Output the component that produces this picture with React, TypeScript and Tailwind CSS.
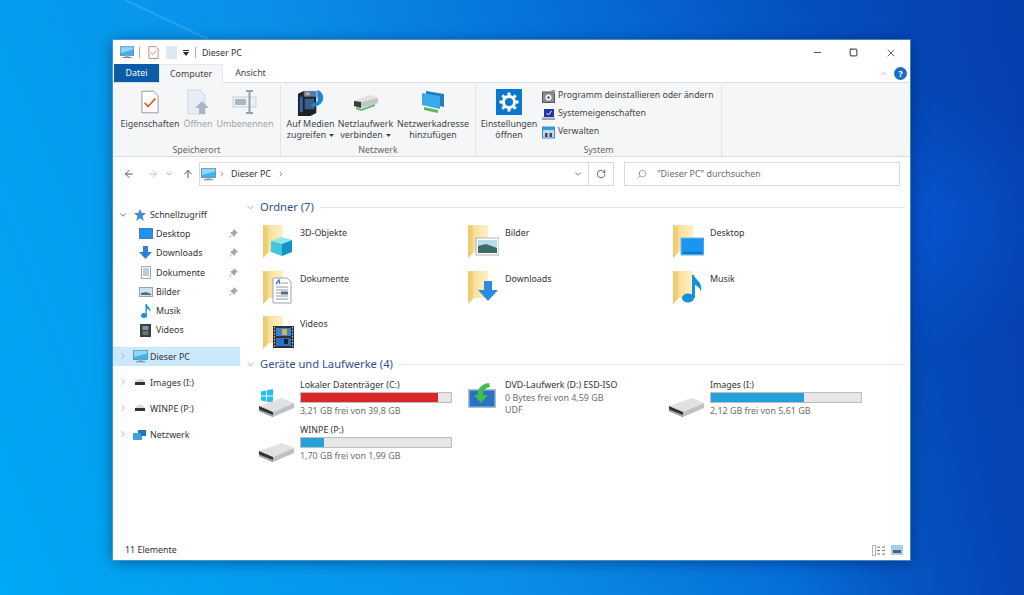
import React from 'react';
import { ArrowLeft, ArrowRight, ArrowUp, ChevronDown, ChevronRight, ChevronUp, Minus, RotateCw, Search, Square, X } from 'lucide-react';

function Monitor({ className = 'w-[17px] h-[15px]' }: { className?: string }) {
  return (
    <svg viewBox="0 0 17 15" className={className}>
      <rect x="0.5" y="0.5" width="16" height="10.5" fill="#3fb2ee" stroke="#5b8fa8" />
      <path d="M1 1h15v3L1 8z" fill="#8ed8f8" />
      <rect x="6" y="11" width="5" height="2" fill="#9fb3c0" />
      <rect x="3" y="13" width="11" height="1.2" fill="#6f8796" />
    </svg>
  );
}

function Folder({ children }: { children?: React.ReactNode }) {
  return (
    <svg viewBox="0 0 32 36" className="w-[32px] h-[36px] shrink-0">
      <defs>
        <linearGradient id="folderFill" x1="0" x2="1" y1="0" y2="0">
          <stop offset="0" stopColor="#f2d27a" />
          <stop offset="0.4" stopColor="#fae3a0" />
          <stop offset="1" stopColor="#fdf0c4" />
        </linearGradient>
      </defs>
      <path d="M1 1h20v27H7l-6 6z" fill="url(#folderFill)" />
      <path d="M1 1v33l5-5V3z" fill="#e6bb55" opacity="0.35" />
      {children}
    </svg>
  );
}

const cube = (
  <g>
    <path d="M9 17l10-4 11 3-10 4z" fill="#8ce6f0" />
    <path d="M9 17l11 3v12L9 28z" fill="#42c6de" />
    <path d="M20 20l10-4v12l-10 4z" fill="#0f94c6" />
  </g>
);
const picture = (
  <g>
    <rect x="9" y="14" width="23" height="17" fill="#fff" stroke="#a9b4bd" />
    <rect x="11" y="16" width="19" height="13" fill="#b7dbe8" />
    <path d="M11 22l8-2 11 4v5H11z" fill="#3d6b68" />
  </g>
);
const desktop = (
  <g>
    <rect x="9" y="14" width="23" height="17" fill="#1b96f0" stroke="#6db7e6" />
    <rect x="11" y="28" width="19" height="1.5" fill="#0b6fc0" />
  </g>
);
const doc = (
  <g>
    <path d="M11 8h14l4 4v21H11z" fill="#fff" stroke="#9aa5ad" />
    <path d="M14 14l3-4 1 4" fill="none" stroke="#3a7bd0" strokeWidth="1.4" />
    <path d="M20 13h6M14 17h12M14 20h12M14 23h5M14 26h12M14 29h12" stroke="#8d98a2" strokeWidth="1" />
    <rect x="19" y="21.5" width="7" height="3" fill="#4e7082" />
  </g>
);
const download = <path d="M17 11h8v9h6L21 31 11 20h6z" fill="#2f8be0" />;
const note = (
  <g fill="#1890dc">
    <ellipse cx="16" cy="28" rx="6" ry="4.5" />
    <path d="M20 5h2c1 5 9 6 7 17-1-4-3-6-6-7v13h-3z" />
  </g>
);
const film = (
  <g>
    <rect x="11" y="11" width="21" height="22" fill="#2d3238" />
    <rect x="14" y="13" width="15" height="8" fill="#3b82d6" />
    <rect x="14" y="23" width="15" height="8" fill="#2a70c8" />
    <rect x="20" y="14" width="5" height="6" fill="#d9b23c" />
    <rect x="22" y="24" width="4" height="5" fill="#15202c" />
    <path d="M12.5 12v20M30.5 12v20" stroke="#c9ced2" strokeWidth="1" strokeDasharray="1.5 1.5" />
  </g>
);

function Drive({ windows = false }: { windows?: boolean }) {
  return (
    <svg viewBox="0 0 36 28" className="w-[36px] h-[28px] shrink-0">
      {windows && <path d="M2 2.500l5-1v5H2zM8 1.300L14 0v6.500H8zM2 7.500h5v5l-5-1zM8 7.500h6V14l-6-1.200z" fill="#22c0ec" />}
      <path d="M0 17L23 9l12 5-21 9z" fill="#e0e1e2" />
      <path d="M0 17l14 6v5L0 22z" fill="#333" />
      <path d="M0 20.500l14 5.500v2L0 22z" fill="#a9abad" />
      <path d="M14 23l21-9v5L14 28z" fill="#bfc1c3" />
    </svg>
  );
}

function DvdDrive() {
  return (
    <svg viewBox="0 0 28 25" className="w-[28px] h-[25px] shrink-0">
      <rect x="0" y="6" width="28" height="19" fill="#a9bfd2" />
      <rect x="1.500" y="7.500" width="25" height="16" fill="#2b72c6" />
      <path d="M21 0C13 1 9 6 10 12H6l7 8 7-8h-5c0-4 2-7 7-8z" fill="#3cc24a" />
    </svg>
  );
}

function TinyDrive() {
  return (
    <svg viewBox="0 0 12 8" className="w-[12px] h-[8px]">
      <path d="M1 4l3-3h5l2 3v3H1z" fill="#d9d9d9" />
      <rect x="1" y="4" width="10" height="3" fill="#333" />
    </svg>
  );
}

function Pin() {
  return (
    <svg viewBox="0 0 9 9" className="w-[9px] h-[9px]">
      <path d="M5 0l4 4-1.500.5L6 6l-.5 2L1 3.500 3 3l1.500-1.500z" fill="#a6a6a6" />
      <path d="M2.500 6.500L0.500 8.500" stroke="#a6a6a6" />
    </svg>
  );
}

function Caret() {
  return (
    <svg viewBox="0 0 5 3" className="inline-block w-[5px] h-[3px] ml-[3px] align-middle">
      <path d="M0 0h5L2.500 3z" fill="#444" />
    </svg>
  );
}

function GroupLabel({ children }: { children: React.ReactNode }) {
  return <div className="h-[12px] leading-[12px] text-center text-[#666]">{children}</div>;
}

function RibbonButton({ icon, lines, disabled, caret, w }: { icon: React.ReactNode; lines: string[]; disabled?: boolean; caret?: boolean; w: string }) {
  return (
    <div className={`flex flex-col items-center ${w} ${disabled ? 'text-[#a2a2a2]' : 'text-[#444]'}`}>
      <div className="h-[32px] flex items-center justify-center">{icon}</div>
      {lines.map((l, i) => (
        <div key={l} className="h-[11px] leading-[11px] whitespace-nowrap">
          {l}
          {caret && i === 1 && <Caret />}
        </div>
      ))}
    </div>
  );
}

const pageCheck = (
  <svg viewBox="0 0 20 26" className="w-[18px] h-[24px]">
    <path d="M1 1h13l5 5v19H1z" fill="#fff" stroke="#8f8f8f" />
    <path d="M4 14l4 4 8-9" fill="none" stroke="#e2682c" strokeWidth="2" />
  </svg>
);
const openIcon = (
  <svg viewBox="0 0 24 26" className="w-[24px] h-[26px]">
    <path d="M2 1h12l5 5v19H2z" fill="#e8eef7" stroke="#ccd6e2" />
    <path d="M16 12l7 7h-4v6h-6v-6H9z" fill="#a9b5c2" />
  </svg>
);
const renameIcon = (
  <svg viewBox="0 0 26 24" className="w-[26px] h-[24px]">
    <rect x="1" y="7" width="23" height="10" fill="#eef1f5" stroke="#c7d0da" />
    <rect x="3" y="9" width="11" height="6" fill="#a8b6c6" />
    <path d="M14 1h7M14 23h7M17.500 1v22" stroke="#93a2b2" strokeWidth="2" />
  </svg>
);
const mediaIcon = (
  <svg viewBox="0 0 28 28" className="w-[27px] h-[27px]">
    <path d="M1 5l6-3h13v23l-6 3H1z" fill="#1e2228" />
    <path d="M7 2h13v6H7z" fill="#6e7d8c" />
    <rect x="9" y="3.500" width="4" height="3" fill="#a7b6c2" />
    <rect x="14.500" y="3.500" width="4" height="3" fill="#3d7fc0" />
    <rect x="8" y="10" width="10" height="11" fill="#3a5f88" />
    <path d="M3 8h3v16H3z" fill="#3a66a0" />
    <path d="M21 1c4 1 7 5 6 10-1 4-4 6-7 7-2 1-5 1-5-1s3-3 5-3c2-1 2-3 1-6z" fill="#1a86d8" />
  </svg>
);
const netDriveIcon = (
  <svg viewBox="0 0 26 20" className="w-[26px] h-[20px]">
    <path d="M1 9l17-6 7 3v5L8 16 1 14z" fill="#c4c6c8" />
    <path d="M1 9l17-6 7 3-17 4z" fill="#e2e3e4" />
    <path d="M1 9l7 1v6l-7-2z" fill="#3c3c3c" />
    <path d="M3 15l5 2 14-5v2L8 19l-5-2z" fill="#5cbb5e" />
  </svg>
);
const netAddrIcon = (
  <svg viewBox="0 0 24 24" className="w-[24px] h-[24px]">
    <path d="M5 1l18 3v13L5 13z" fill="#1f7dc4" />
    <path d="M1 3l18 3v13L1 15z" fill="#39a9e8" />
    <path d="M3 17l14 3v3L3 20z" fill="#57b95c" />
  </svg>
);
const gearIcon = (
  <svg viewBox="0 0 26 26" className="w-[26px] h-[26px]">
    <rect width="26" height="26" fill="#0a78d0" />
    <circle cx="13" cy="13" r="5.500" fill="none" stroke="#fff" strokeWidth="3" />
    <path d="M13 3.500v4M13 18.500v4M3.500 13h4M18.500 13h4M6.300 6.300l2.800 2.800M16.900 16.900l2.800 2.800M19.700 6.300l-2.800 2.800M9.100 16.900l-2.800 2.800" stroke="#fff" strokeWidth="3" />
  </svg>
);

const systemRows = [
  {
    label: 'Programm deinstallieren oder ändern',
    icon: (
      <svg viewBox="0 0 13 13" className="w-[13px] h-[13px]">
        <rect x="0.500" y="2" width="12" height="10.500" fill="#8a8f93" stroke="#555" />
        <circle cx="6.500" cy="7.500" r="3" fill="#fff" />
        <circle cx="6.500" cy="7.500" r="1.200" fill="#444" />
        <path d="M9 0h4v4z" fill="#c79a5a" />
      </svg>
    ),
  },
  {
    label: 'Systemeigenschaften',
    icon: (
      <svg viewBox="0 0 13 13" className="w-[13px] h-[13px]">
        <rect x="2" y="1" width="10" height="8" fill="#2534a8" />
        <path d="M4.500 5l2 2 3-4" fill="none" stroke="#fff" />
        <rect x="0" y="9.500" width="13" height="2.500" fill="#9da6ae" />
      </svg>
    ),
  },
  {
    label: 'Verwalten',
    icon: (
      <svg viewBox="0 0 13 13" className="w-[13px] h-[13px]">
        <rect x="0.500" y="1" width="12" height="11" fill="#b7dbef" stroke="#4c90c0" />
        <rect x="1" y="1" width="11" height="3" fill="#3c98d6" />
        <rect x="3" y="7" width="2.500" height="4" fill="#444" />
        <rect x="7.500" y="7" width="2.500" height="4" fill="#444" />
      </svg>
    ),
  },
];

const quick = [
  { name: 'Desktop', pin: true, icon: <svg viewBox="0 0 14 11" className="w-[14px] h-[11px]"><rect x="0.500" y="0.500" width="13" height="10" fill="#1b96f0" stroke="#4d7ea0" /></svg> },
  { name: 'Downloads', pin: true, icon: <svg viewBox="0 0 13 13" className="w-[13px] h-[13px]"><path d="M4 0h5v6h4l-6.500 7L0 6h4z" fill="#2f80d4" /></svg> },
  { name: 'Dokumente', pin: true, icon: <svg viewBox="0 0 10 13" className="w-[10px] h-[13px]"><path d="M.500.500h9v12h-9z" fill="#fff" stroke="#9aa5ad" /><path d="M2 3h6M2 5h6M2 7h6M2 9h6" stroke="#7e9aaf" /></svg> },
  { name: 'Bilder', pin: true, icon: <svg viewBox="0 0 14 10" className="w-[14px] h-[10px]"><rect x="0.500" y="0.500" width="13" height="9" fill="#cfe2ee" stroke="#98a6b2" /><path d="M2 6l5-1 5 2v1H2z" fill="#4c6f80" /></svg> },
  { name: 'Musik', pin: false, icon: <svg viewBox="0 0 10 14" className="w-[10px] h-[14px]"><ellipse cx="3" cy="11.500" rx="3" ry="2.500" fill="#1890dc" /><path d="M4.500 0h1.300c.5 3 4.500 4 3.500 8-.5-2-2-3-3.500-3.500V12h-1.300z" fill="#1890dc" /></svg> },
  { name: 'Videos', pin: false, icon: <svg viewBox="0 0 11 13" className="w-[11px] h-[13px]"><rect width="11" height="13" fill="#3c4046" /><rect x="2.500" y="2" width="6" height="4" fill="#7d9aa8" /><rect x="2.500" y="7" width="6" height="4" fill="#5f7d5c" /></svg> },
];

const folders = [
  { name: '3D-Objekte', overlay: cube },
  { name: 'Bilder', overlay: picture },
  { name: 'Desktop', overlay: desktop },
  { name: 'Dokumente', overlay: doc },
  { name: 'Downloads', overlay: download },
  { name: 'Musik', overlay: note },
  { name: 'Videos', overlay: film },
];

function SectionHeader({ title }: { title: string }) {
  return (
    <div className="flex items-center h-[16px]">
      <ChevronDown className="w-[11px] h-[11px] text-[#8a8a8a] ml-[-3px] mr-[4px]" strokeWidth={1.5} />
      <span className="text-[11.200px] text-[#2f4f95] whitespace-nowrap">{title}</span>
      <div className="flex-1 h-px bg-[#e5e5e5] ml-[6px]" />
    </div>
  );
}

function Bar({ pct, red }: { pct: number; red?: boolean }) {
  return (
    <div className="w-[152px] h-[11px] bg-[#e6e6e6] border border-[#bcbcbc] mt-[1.500px] mb-px">
      <div className={`h-full ${red ? 'bg-[#da2626]' : 'bg-[#26a0da]'}`} style={{ width: `${pct}%` }} />
    </div>
  );
}

function NavRow({ name, icon, open }: { name: string; icon: React.ReactNode; open?: boolean }) {
  return (
    <div className="flex items-center h-[19px] pl-[5px]">
      {open ? <ChevronDown className="w-[10px] h-[10px] text-[#555]" /> : <ChevronRight className="w-[10px] h-[10px] text-[#a6a6a6]" />}
      <div className="w-[18px] ml-[3px] flex justify-center">{icon}</div>
      <span className="ml-px text-[#333]">{name}</span>
    </div>
  );
}

function DriveItem({ name, free, pct, red, windows }: { name: string; free: string; pct: number; red?: boolean; windows?: boolean }) {
  return (
    <div className="flex items-start gap-[5px]">
      <div className="mt-[11px]"><Drive windows={windows} /></div>
      <div>
        <div className="leading-[13px]">{name}</div>
        <Bar pct={pct} red={red} />
        <div className="leading-[13px] text-[#6d6d6d]">{free}</div>
      </div>
    </div>
  );
}

export default function App() {
  return (
    <div className="relative w-[1024px] h-[595px] overflow-hidden pl-[113px] pt-[40px] font-['Noto_Sans',sans-serif] text-[8.900px] bg-[radial-gradient(circle_at_930px_220px,rgba(10,100,240,0.4),transparent_130px),linear-gradient(90deg,transparent_78%,rgba(5,60,170,0.6)_100%),linear-gradient(68deg,#00aaf5_0%,#0a90e8_40%,#0670da_62%,#0550c0_82%,#0545b0_100%)]">
      {/* Wallpaper light ray */}
      <svg viewBox="0 0 1024 595" className="absolute inset-0 w-[1024px] h-[595px]">
        <path d="M125 0L210 40" stroke="#7fd0ff" strokeOpacity="0.25" strokeWidth="2" />
      </svg>
      {/* Explorer window */}
      <div className="relative w-[797px] h-[520px] bg-white flex flex-col shadow-[0_0_0_1px_rgba(90,160,210,0.7),0_2px_14px_rgba(0,20,70,0.5)]">
        {/* Title bar */}
        <div className="h-[25px] flex items-center pl-[7px] shrink-0">
          <Monitor className="w-[14px] h-[13px]" />
          <div className="w-px h-[11px] bg-[#aaa] ml-[5px] mr-[8px]" />
          <svg viewBox="0 0 11 14" className="w-[11px] h-[13px]"><path d="M.500.500h7l3 3v10h-10z" fill="#fff" stroke="#c08a78" /><path d="M2.500 7l2 2 4-4" fill="none" stroke="#e2682c" /></svg>
          <div className="w-[11px] h-[13px] bg-[#dfe7f3] ml-[7px]" />
          <svg viewBox="0 0 6 6" className="w-[6px] h-[6px] ml-[6px]"><path d="M0 0h6v1H0zM0 2h6L3 6z" fill="#222" /></svg>
          <div className="w-px h-[11px] bg-[#aaa] ml-[6px] mr-[6px]" />
          <span className="text-[#333]">Dieser PC</span>
          <div className="flex-1" />
          <Minus className="w-[11px] h-[11px] text-[#444] mr-[26px]" />
          <Square className="w-[9px] h-[9px] text-[#222] mr-[27px]" strokeWidth={2.5} />
          <X className="w-[12px] h-[12px] text-[#333] mr-[13px]" strokeWidth={1.5} />
        </div>
        {/* Tabs */}
        <div className="h-[18px] flex items-end border-b border-[#dadbdc] shrink-0 pl-px relative">
          <div className="w-[45px] h-[18px] leading-[18px] text-center bg-[#0a5ca8] text-white">Datei</div>
          <div className="w-[64px] h-[19px] leading-[18px] text-center bg-[#f5f6f7] text-[#444] border-x border-t border-[#e6e7e8] mb-[-1px]">Computer</div>
          <div className="w-[55px] h-[18px] leading-[18px] text-center text-[#444]">Ansicht</div>
          <div className="flex-1" />
          <ChevronUp className="w-[9px] h-[9px] text-[#b0b0b0] mb-[4px] mr-[6px]" />
          <div className="w-[13px] h-[13px] rounded-full bg-[#1a6fc4] text-white font-bold text-center leading-[13px] mb-[2px] mr-[3px]">?</div>
        </div>
        {/* Ribbon */}
        <div className="h-[74px] bg-[#f5f6f7] border-b border-[#dadbdc] flex shrink-0 pt-[3px]">
          <div className="w-[168px] flex flex-col justify-between border-r border-[#e2e3e4]">
            <div className="flex pl-[7px] gap-[3px]">
              <RibbonButton icon={pageCheck} lines={['Eigenschaften']} w="w-[60px]" />
              <RibbonButton icon={openIcon} lines={['Öffnen']} disabled w="w-[30px]" />
              <RibbonButton icon={renameIcon} lines={['Umbenennen']} disabled w="w-[58px]" />
            </div>
            <GroupLabel>Speicherort</GroupLabel>
          </div>
          <div className="w-[195px] flex flex-col justify-between border-r border-[#e2e3e4]">
            <div className="flex pl-[5px] gap-[3px]">
              <RibbonButton icon={mediaIcon} lines={['Auf Medien', 'zugreifen']} caret w="w-[49px]" />
              <RibbonButton icon={netDriveIcon} lines={['Netzlaufwerk', 'verbinden']} caret w="w-[55px]" />
              <RibbonButton icon={netAddrIcon} lines={['Netzwerkadresse', 'hinzufügen']} w="w-[74px]" />
            </div>
            <GroupLabel>Netzwerk</GroupLabel>
          </div>
          <div className="w-[246px] flex flex-col justify-between border-r border-[#e2e3e4]">
            <div className="flex pl-[4px] gap-[4px]">
              <RibbonButton icon={gearIcon} lines={['Einstellungen', 'öffnen']} w="w-[58px]" />
              <div className="flex flex-col gap-[4px] pt-[3px] text-[#444] text-[8.750px]">
                {systemRows.map((r) => (
                  <div key={r.label} className="flex items-center h-[14px] gap-[3px] whitespace-nowrap">
                    {r.icon}
                    <span>{r.label}</span>
                  </div>
                ))}
              </div>
            </div>
            <GroupLabel>System</GroupLabel>
          </div>
        </div>
        {/* Address row */}
        <div className="h-[33px] flex items-center shrink-0 pl-[10px] pt-px">
          <ArrowLeft className="w-[12px] h-[12px] text-[#555]" />
          <ArrowRight className="w-[12px] h-[12px] text-[#c4c4c4] ml-[12px]" />
          <ChevronDown className="w-[8px] h-[8px] text-[#888] ml-[6px]" />
          <ArrowUp className="w-[12px] h-[12px] text-[#555] ml-[9px]" />
          <div className="w-[415px] h-[24px] border border-[#d9d9d9] flex items-center ml-[5px]">
            <Monitor className="w-[15px] h-[13px] ml-px" />
            <ChevronRight className="w-[8px] h-[8px] text-[#666] ml-[2px]" />
            <span className="ml-[5px] text-[#333]">Dieser PC</span>
            <ChevronRight className="w-[8px] h-[8px] text-[#666] ml-[6px]" />
            <div className="flex-1" />
            <ChevronDown className="w-[10px] h-[10px] text-[#666] mr-[5px]" />
            <div className="w-[25px] h-full border-l border-[#d9d9d9] flex items-center justify-center">
              <RotateCw className="w-[10px] h-[10px] text-[#555]" />
            </div>
          </div>
          <div className="w-[276px] h-[24px] border border-[#d9d9d9] flex items-center ml-[10px] pl-[12px] text-[#6d6d6d]">
            <Search className="w-[10px] h-[10px] text-[#999] -scale-x-100" />
            <span className="ml-[10px]">"Dieser PC" durchsuchen</span>
          </div>
        </div>
        {/* Main */}
        <div className="flex-1 flex min-h-0">
          {/* Navigation pane */}
          <div className="w-[127px] shrink-0 pt-[15px]">
            <NavRow
              name="Schnellzugriff"
              open
              icon={<svg viewBox="0 0 12 12" className="w-[12px] h-[12px]"><path d="M6 0l1.800 4H12L8.600 7l1.200 5L6 9.300 2.200 12l1.200-5L0 4h4.200z" fill="#3b8fd4" /></svg>}
            />
            {quick.map((q) => (
              <div key={q.name} className="flex items-center h-[19.300px] pl-[25px] text-[#333]">
                <div className="w-[15px] flex justify-center">{q.icon}</div>
                <span className="ml-[3px]">{q.name}</span>
                <div className="flex-1" />
                {q.pin && <div className="mr-[2px]"><Pin /></div>}
              </div>
            ))}
            <div className="mt-[7px] bg-[#cce8ff]">
              <NavRow name="Dieser PC" icon={<Monitor className="w-[15px] h-[13px]" />} />
            </div>
            <div className="mt-[7px]"><NavRow name="Images (I:)" icon={<TinyDrive />} /></div>
            <div className="mt-[7px]"><NavRow name="WINPE (P:)" icon={<TinyDrive />} /></div>
            <div className="mt-[7px]">
              <NavRow
                name="Netzwerk"
                icon={<svg viewBox="0 0 14 13" className="w-[14px] h-[13px]"><rect x="0" y="5" width="9" height="7" fill="#3aa0e0" /><path d="M5 2h8v6H8V5H5z" fill="#1c78c4" /></svg>}
              />
            </div>
          </div>
          {/* Content */}
          <div className="flex-1 pl-[8px] pr-[5px] pt-[9px] min-w-0">
            <SectionHeader title="Ordner (7)" />
            <div className="grid grid-cols-[205px_205px_205px] auto-rows-[45.500px] pt-[9px] pl-[14px]">
              {folders.map((f) => (
                <div key={f.name} className="flex">
                  <Folder>{f.overlay}</Folder>
                  <span className="ml-[6px] mt-[2px] text-[#333]">{f.name}</span>
                </div>
              ))}
            </div>
            <div className="mt-[-4px]">
              <SectionHeader title="Geräte und Laufwerke (4)" />
            </div>
            <div className="grid grid-cols-[205px_205px_205px] auto-rows-[45px] pt-[5px] pl-[11px] text-[#333]">
              <DriveItem name="Lokaler Datenträger (C:)" free="3,21 GB frei von 39,8 GB" pct={91.500} red windows />
              <div className="flex items-start gap-[9px] pl-[4px]">
                <div className="mt-[5px]"><DvdDrive /></div>
                <div>
                  <div className="leading-[13px]">DVD-Laufwerk (D:) ESD-ISO</div>
                  <div className="leading-[13px] text-[#6d6d6d]">0 Bytes frei von 4,59 GB</div>
                  <div className="leading-[12px] text-[#6d6d6d]">UDF</div>
                </div>
              </div>
              <DriveItem name="Images (I:)" free="2,12 GB frei von 5,61 GB" pct={62} />
              <DriveItem name="WINPE (P:)" free="1,70 GB frei von 1,99 GB" pct={15} />
            </div>
          </div>
        </div>
        {/* Status bar */}
        <div className="h-[20px] flex items-center shrink-0 pl-[12px] text-[#333]">
          <span>11 Elemente</span>
          <div className="flex-1" />
          <svg viewBox="0 0 14 11" className="w-[14px] h-[11px] mr-[5px]"><rect x="0.500" y="0.500" width="3" height="10" fill="none" stroke="#b5b5b5" /><path d="M5 2h3M10 2h3M5 5.500h3M10 5.500h3M5 9h3M10 9h3" stroke="#777" /></svg>
          <svg viewBox="0 0 12 10" className="w-[12px] h-[10px] mr-[7px]"><rect width="12" height="10" fill="#a9cfe8" /><rect x="2" y="5" width="8" height="3" fill="#4c6070" /></svg>
        </div>
      </div>
    </div>
  );
}
